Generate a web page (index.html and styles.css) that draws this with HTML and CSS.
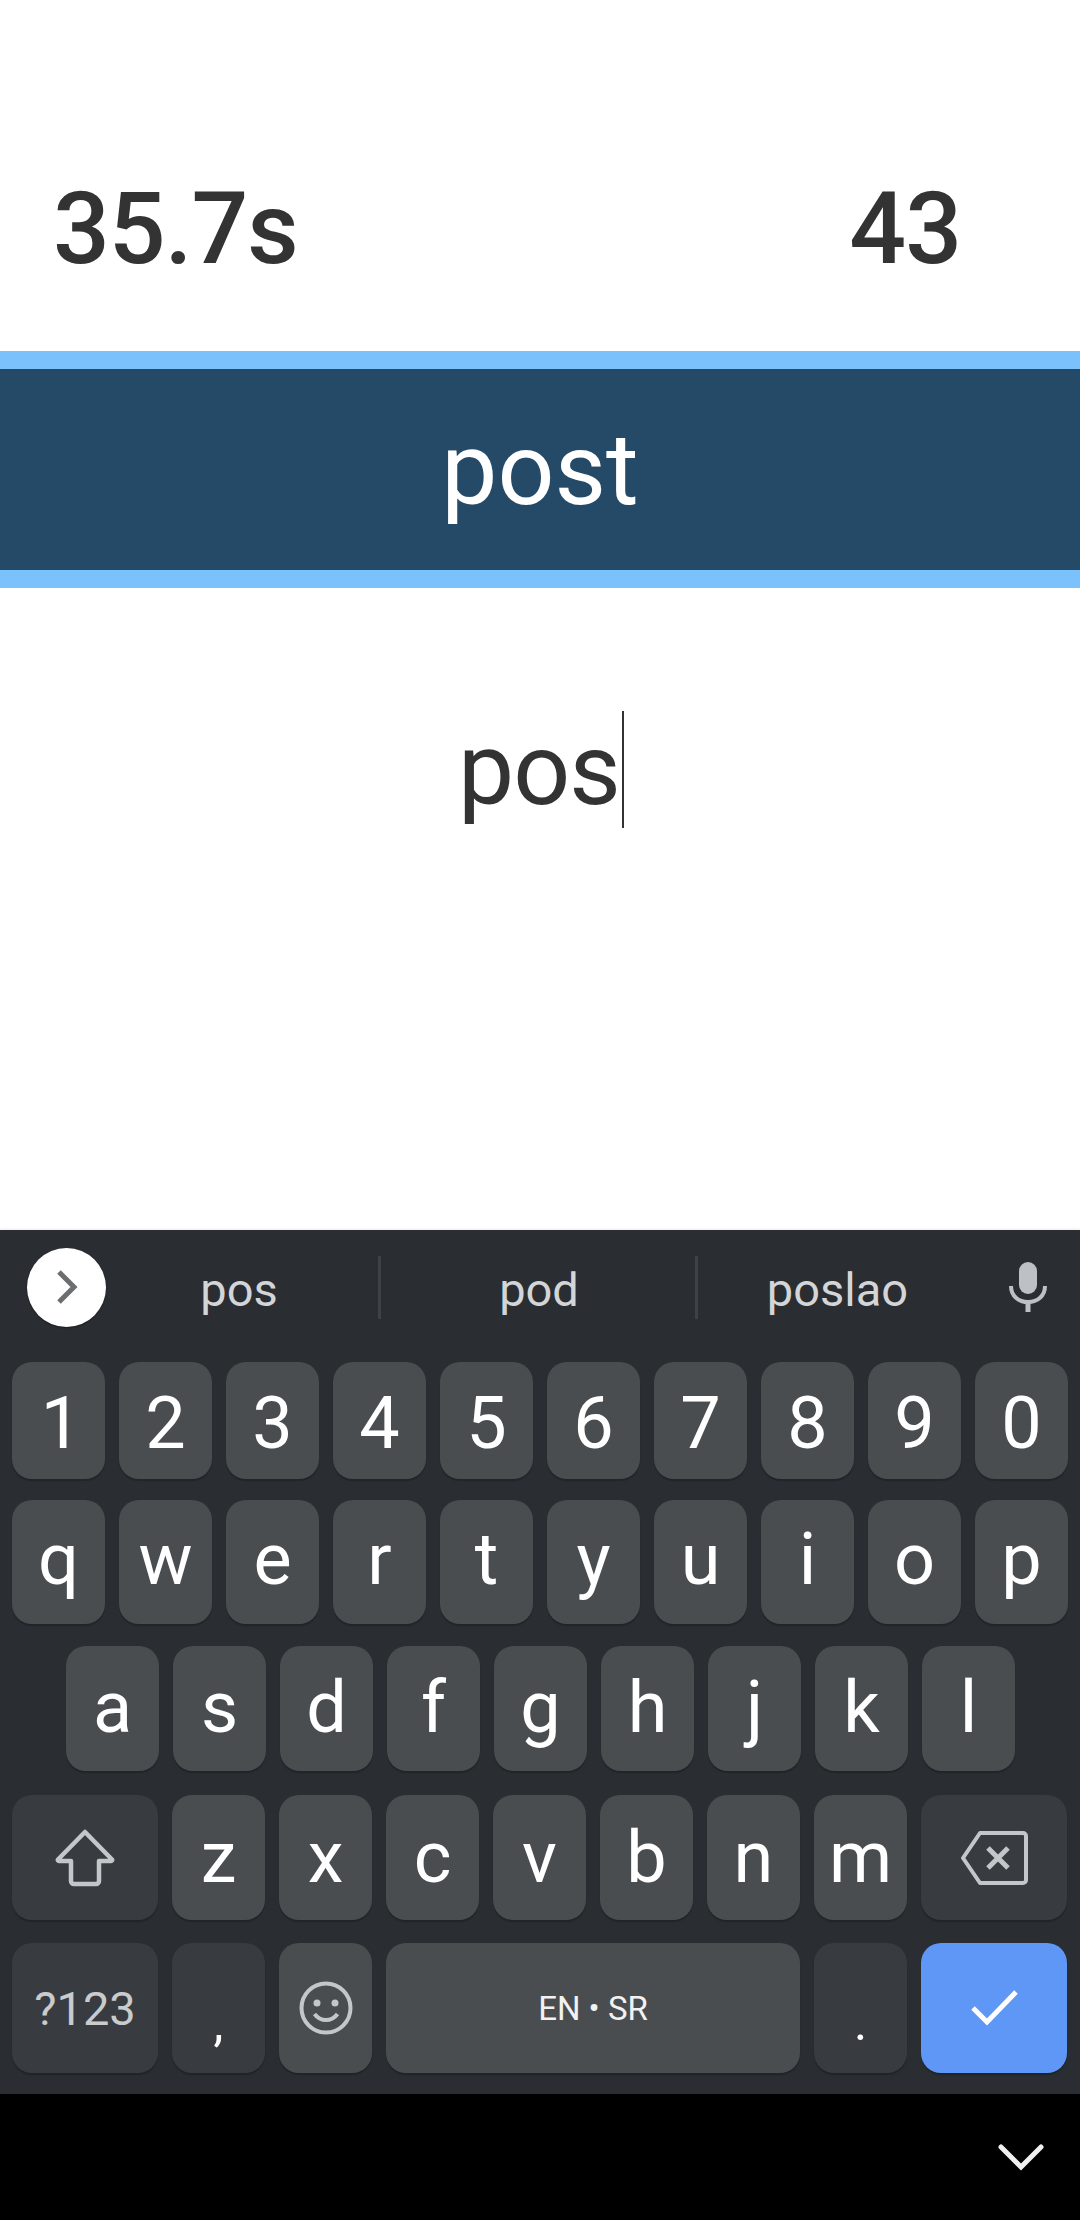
FILE: index.html
```html
<!DOCTYPE html>
<html lang="en">
<head>
<meta charset="utf-8">
<title>Typing game</title>
<link rel="stylesheet" href="styles.css">
</head>
<body>
<main class="screen">
  <section class="stats">
    <span class="stat">35.7s</span>
    <span class="stat">43</span>
  </section>
  <section class="word-band"><span class="word">post</span></section>
  <section class="answer"><span class="answer-text">pos<span class="caret"></span></span></section>
  <section class="keyboard">
    <div class="suggest">
      <span class="expand"><svg width="40" height="40" viewBox="0 0 40 40"><path d="M12 5l15 15-15 15" fill="none" stroke="#6b6d70" stroke-width="5"/></svg></span>
      <span class="sug sug-a">pos</span>
      <span class="sep"></span>
      <span class="sug sug-b">pod</span>
      <span class="sep"></span>
      <span class="sug sug-c">poslao</span>
      <svg class="mic" width="38" height="50" viewBox="0 0 38 50"><rect x="10" y="0" width="18" height="32" rx="9" fill="#bdc1c6"/><path d="M2 24c0 10 7.500 16 17 16s17-6 17-16" fill="none" stroke="#bdc1c6" stroke-width="4"/><rect x="16.500" y="38" width="5" height="12" fill="#bdc1c6"/></svg>
    </div>
    <div class="row row-num">
      <span class="key key-one">1</span><span class="key">2</span><span class="key">3</span><span class="key">4</span><span class="key">5</span><span class="key">6</span><span class="key">7</span><span class="key">8</span><span class="key">9</span><span class="key">0</span>
    </div>
    <div class="row row-top">
      <span class="key">q</span><span class="key">w</span><span class="key">e</span><span class="key">r</span><span class="key">t</span><span class="key">y</span><span class="key">u</span><span class="key">i</span><span class="key">o</span><span class="key">p</span>
    </div>
    <div class="row row-home">
      <span class="key">a</span><span class="key">s</span><span class="key">d</span><span class="key">f</span><span class="key">g</span><span class="key">h</span><span class="key">j</span><span class="key">k</span><span class="key">l</span>
    </div>
    <div class="row row-low">
      <span class="key key-wide key-dim"><svg width="60" height="58" viewBox="0 0 60 58"><path d="M30 3L3 30.500a1 1 0 0 0 1 1.500h12v20a3 3 0 0 0 3 3h22a3 3 0 0 0 3-3V32h12a1 1 0 0 0 1-1.500z" fill="none" stroke="#c4c7c9" stroke-width="4.500" stroke-linejoin="round"/></svg></span>
      <span class="key">z</span><span class="key">x</span><span class="key">c</span><span class="key">v</span><span class="key">b</span><span class="key">n</span><span class="key">m</span>
      <span class="key key-wide key-dim"><svg width="68" height="54" viewBox="0 0 68 54"><path d="M20 2h43a3 3 0 0 1 3 3v44a3 3 0 0 1-3 3H20L3 27z" fill="none" stroke="#c4c7c9" stroke-width="4" stroke-linejoin="round"/><path d="M28 17l20 20M48 17L28 37" fill="none" stroke="#c4c7c9" stroke-width="5"/></svg></span>
    </div>
    <div class="row row-bottom">
      <span class="key key-wide key-dim key-sym">?123</span>
      <span class="key key-dim key-punct">,</span>
      <span class="key"><svg width="54" height="54" viewBox="0 0 54 54"><circle cx="27" cy="27" r="24.500" fill="none" stroke="#c4c7c9" stroke-width="4"/><circle cx="18" cy="22" r="3.500" fill="#c4c7c9"/><circle cx="36" cy="22" r="3.500" fill="#c4c7c9"/><path d="M15.500 33c3 4 7 6 11.500 6s8.500-2 11.500-6" fill="none" stroke="#c4c7c9" stroke-width="4"/></svg></span>
      <span class="key key-space">EN • SR</span>
      <span class="key key-dim key-punct">.</span>
      <span class="key key-wide key-go"><svg width="48" height="38" viewBox="0 0 48 38"><path d="M3 19l14 14L46 3" fill="none" stroke="#fff" stroke-width="5"/></svg></span>
    </div>
  </section>
  <footer class="navbar">
    <svg width="46" height="28" viewBox="0 0 46 28"><path d="M3 3l20 20L43 3" fill="none" stroke="#f0f0f0" stroke-width="5" stroke-linecap="round"/></svg>
  </footer>
</main>
</body>
</html>
```
FILE: styles.css
```css
* { box-sizing: border-box; }
html, body { margin: 0; padding: 0; background: #fff; }
body { font-family: Roboto, "Liberation Sans", sans-serif; }
.screen { width: 1080px; height: 2220px; display: flex; flex-direction: column; overflow: hidden; }

.stats { height: 351px; padding: 179px 119px 0 53px; display: flex; justify-content: space-between; align-items: flex-start; }
.stat { font-size: 100px; font-weight: 500; color: #333; line-height: 1; letter-spacing: -1px; }

.word-band { height: 237px; background: #254a68; border-top: 18px solid #7bc1fb; border-bottom: 18px solid #7bc1fb; display: flex; justify-content: center; align-items: center; }
.word { font-size: 100px; color: #fff; line-height: 1; }

.answer { height: 642px; display: flex; justify-content: center; padding: 123px 0 0 2px; }
.answer-text { font-size: 100px; line-height: 117px; height: 117px; color: #333; letter-spacing: -1px; }
.caret { display: inline-block; width: 2px; height: 117px; background: #333; vertical-align: top; margin-left: 2px; }

.keyboard { height: 864px; background: #2a2e32; padding: 0 12px; display: flex; flex-direction: column; box-shadow: 0 -1px 3px rgba(0,0,0,.08); position: relative; }

.suggest { height: 132px; display: flex; align-items: center; color: #d3d5d7; font-size: 47px; padding-bottom: 18px; }
.expand { width: 79px; height: 79px; margin: 0 0 0 15px; border-radius: 50%; background: #fff; display: flex; align-items: center; justify-content: center; flex: none; box-shadow: 0 1px 2px rgba(0,0,0,.4); }
.sug { text-align: center; flex: none; margin-top: 4px; }
.sug-a { width: 266px; }
.sug-b { width: 314px; padding-left: 2px; }
.sug-c { width: 279px; }
.sep { width: 3px; height: 63px; background: #3e4246; flex: none; }
.sug-a + .sep { margin-left: 6px; }
.mic { margin: 0 0 0 32px; flex: none; }

.row { display: flex; gap: 14px; }
.row-num { height: 117px; }
.row-num .key { padding-top: 6px; }
.row-num .key-one { padding-left: 5px; }
.row-top { height: 124px; margin-top: 21px; }
.row-top .key { padding-bottom: 4px; }
.row-home { height: 125px; margin-top: 22px; padding: 0 54px; }
.row-home .key { padding-bottom: 2px; }
.row-low { height: 125px; margin-top: 24px; }
.row-bottom { height: 130px; margin-top: 23px; }

.key { width: 93px; flex: none; height: 100%; border-radius: 20px; background: #494d50; color: #fff; font-size: 72px; display: flex; align-items: center; justify-content: center; box-shadow: 0 2px 1px #212429; line-height: 1; }
.key-wide { width: 146px; }
.key-dim { background: #383c40; }
.key-sym { font-size: 47px; color: #c9cbcd; }
.key-punct { font-size: 50px; align-items: flex-end; padding-bottom: 25px; }
.key-space { width: 414px; font-size: 33px; color: #f2f2f2; }
.key-go { background: #5e97f6; }

.navbar { flex: 1; background: #000; display: flex; justify-content: flex-end; align-items: flex-start; padding: 50px 36px 0 0; }
```
